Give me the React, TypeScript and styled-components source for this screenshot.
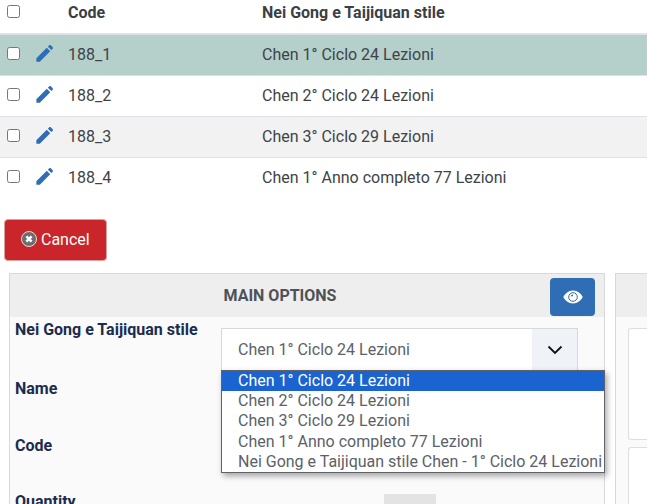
import React from 'react';
import styled, { createGlobalStyle } from 'styled-components';

const GlobalStyle = createGlobalStyle`
  html, body {
    margin: 0;
    padding: 0;
    height: 504px;
    overflow: hidden;
    background: #fff;
    font-family: Roboto, "Liberation Sans", sans-serif;
    font-size: 16px;
    color: #343a40;
  }
  * { box-sizing: border-box; }
`;

const rows = [
  { code: '188_1', name: 'Chen 1° Ciclo 24 Lezioni', tone: 'selected' },
  { code: '188_2', name: 'Chen 2° Ciclo 24 Lezioni', tone: 'plain' },
  { code: '188_3', name: 'Chen 3° Ciclo 29 Lezioni', tone: 'striped' },
  { code: '188_4', name: 'Chen 1° Anno completo 77 Lezioni', tone: 'plain' },
];

const options = [
  'Chen 1° Ciclo 24 Lezioni',
  'Chen 2° Ciclo 24 Lezioni',
  'Chen 3° Ciclo 29 Lezioni',
  'Chen 1° Anno completo 77 Lezioni',
  'Nei Gong e Taijiquan stile Chen - 1° Ciclo 24 Lezioni',
];

const PencilIcon = () => (
  <svg width="17" height="17" viewBox="0 0 24 24" fill="#2f6db5">
    <path d="M0.5 23.5 V18.6 L15.2 3.9 L20.1 8.8 L5.4 23.5 Z M16.8 2.3 L18.4 0.7 C19.2 -0.1 20.4 -0.1 21.2 0.7 L23.3 2.8 C24.1 3.6 24.1 4.8 23.3 5.6 L21.7 7.2 Z" />
  </svg>
);

const EyeIcon = () => (
  <svg width="20" height="14" viewBox="0 0 20 14">
    <path d="M10 0.5 C5.5 0.5 2 3.5 0.3 7 C2 10.5 5.5 13.5 10 13.5 C14.5 13.5 18 10.5 19.7 7 C18 3.5 14.5 0.5 10 0.5 Z" fill="#fff" />
    <circle cx="10" cy="7" r="4.3" fill="#fff" stroke="#2f6db5" strokeWidth="1" />
    <path d="M7.6 6.2 A2.6 2.6 0 0 1 10 4.4 L10 6.2 Z" fill="#2f6db5" />
  </svg>
);

const CancelIcon = () => (
  <svg width="16" height="16" viewBox="0 0 16 16">
    <circle cx="8" cy="8" r="7.5" fill="#6d6d6d" stroke="#e9dada" strokeWidth="1" />
    <path d="M5.4 5.4 L10.6 10.6 M10.6 5.4 L5.4 10.6" stroke="#fff" strokeWidth="2.6" />
  </svg>
);

const ChevronIcon = () => (
  <svg width="16" height="10" viewBox="0 0 16 10" fill="none">
    <path d="M1.5 1.5 L8 8 L14.5 1.5" stroke="#111" strokeWidth="1.8" />
  </svg>
);

export default function App() {
  return (
    <Page>
      <GlobalStyle />
      <TableGrid>
        <HeaderRow>
          <CheckCell><Check /></CheckCell>
          <span />
          <HeadText>Code</HeadText>
          <HeadText>Nei Gong e Taijiquan stile</HeadText>
        </HeaderRow>
        {rows.map((row) => (
          <BodyRow key={row.code} $tone={row.tone}>
            <CheckCell><Check /></CheckCell>
            <IconCell><PencilIcon /></IconCell>
            <span>{row.code}</span>
            <span>{row.name}</span>
          </BodyRow>
        ))}
      </TableGrid>

      <CancelButton>
        <CancelIcon />
        Cancel
      </CancelButton>

      <Columns>
        <Panel>
          <PanelHeader>
            <PanelTitle>MAIN OPTIONS</PanelTitle>
            <EyeButton><EyeIcon /></EyeButton>
          </PanelHeader>
          <Form>
            <FieldRow>
              <Label>Nei Gong e Taijiquan stile</Label>
              <SelectBox>
                <SelectValue>Chen 1° Ciclo 24 Lezioni</SelectValue>
                <SelectArrow><ChevronIcon /></SelectArrow>
              </SelectBox>
              <Dropdown>
                {options.map((option, i) => (
                  <Option key={option} $active={i === 0}>{option}</Option>
                ))}
              </Dropdown>
            </FieldRow>
            <NameLabel>Name</NameLabel>
            <CodeRow>
              <Label>Code</Label>
              <InputBox />
            </CodeRow>
            <QuantityRow>
              <Label>Quantity</Label>
              <Stepper />
            </QuantityRow>
          </Form>
        </Panel>
        <SidePanel>
          <SideHeader />
          <SideBody>
            <SideBox $height={112} />
            <SideBox $height={60} />
          </SideBody>
        </SidePanel>
      </Columns>
    </Page>
  );
}

const Page = styled.div`
  width: 647px;
  height: 504px;
  overflow: hidden;
`;

const TableGrid = styled.div`
  display: flex;
  flex-direction: column;
`;

const HeaderRow = styled.div`
  display: grid;
  grid-template-columns: 30px 38px 194px 1fr;
  align-items: center;
  height: 35px;
  padding-bottom: 9px;
  border-bottom: 2px solid #dee2e6;
`;

const HeadText = styled.span`
  font-weight: 700;
  font-size: 16px;
  color: #3a3f44;
`;

const BodyRow = styled.div<{ $tone: string }>`
  display: grid;
  grid-template-columns: 30px 38px 194px 1fr;
  align-items: center;
  height: 41px;
  padding-bottom: 2px;
  font-size: 16px;
  color: #3e4347;
  border-bottom: 1px solid #dee2e6;
  background: ${(p) =>
    p.$tone === 'selected' ? '#b5cfcb' : p.$tone === 'striped' ? '#f2f2f2' : '#fff'};

  &:last-child {
    border-bottom-color: transparent;
  }
`;

const CheckCell = styled.span`
  display: flex;
  padding-left: 7px;
  margin-top: -1px;
`;

const Check = styled.span`
  width: 13px;
  height: 13px;
  background: #fff;
  border: 1px solid #767676;
  border-radius: 2.5px;
`;

const IconCell = styled.span`
  display: flex;
  padding-left: 6px;
  margin-top: -2px;
`;

const CancelButton = styled.button`
  display: flex;
  align-items: center;
  gap: 4px;
  width: 103px;
  height: 42px;
  margin: 20px 0 12px 4px;
  padding: 0 0 2px 16px;
  background: #c9252a;
  border: 1px solid #d9a0a0;
  border-radius: 4px;
  color: #fff;
  font-family: inherit;
  font-size: 16px;
`;

const Columns = styled.div`
  display: grid;
  grid-template-columns: 596px 60px;
  gap: 10px;
  margin-left: 9px;
`;

const Panel = styled.section`
  position: relative;
  height: 260px;
  background: #fafafa;
  border: 1px solid #d8d8d8;
  border-bottom: none;
`;

const PanelHeader = styled.header`
  display: flex;
  align-items: center;
  justify-content: center;
  height: 43px;
  padding-right: 54px;
  background: #eeeeee;
  position: relative;
`;

const PanelTitle = styled.h3`
  margin: 0;
  font-size: 16px;
  font-weight: 700;
  color: #4d5257;
`;

const EyeButton = styled.button`
  position: absolute;
  right: 9px;
  top: 4px;
  width: 45px;
  height: 38px;
  display: flex;
  align-items: center;
  justify-content: center;
  padding: 0;
  background: #2f6db5;
  border: none;
  border-radius: 4px;
`;

const Form = styled.div`
  display: flex;
  flex-direction: column;
  padding-left: 5px;
`;

const FieldRow = styled.div`
  position: relative;
  display: grid;
  grid-template-columns: 206px 357px;
  height: 53px;
  padding-top: 3px;
`;

const Label = styled.label`
  font-size: 16px;
  font-weight: 700;
  color: #1b2c4f;
`;

const SelectBox = styled.div`
  display: flex;
  justify-content: space-between;
  height: 44px;
  margin-top: 8px;
  background: #fff;
  border: 1px solid #d8d8d8;
`;

const SelectValue = styled.span`
  padding: 11px 0 0 16px;
  font-size: 16px;
  color: #5c6167;
`;

const SelectArrow = styled.span`
  display: flex;
  align-items: center;
  justify-content: center;
  width: 45px;
  background: #eff3f8;
`;

const Dropdown = styled.ul`
  position: absolute;
  left: 206px;
  top: 53px;
  width: 384px;
  margin: 0;
  padding: 0;
  list-style: none;
  background: #fff;
  border: 1px solid #5f6368;
  box-shadow: 2px 3px 6px rgba(0, 0, 0, 0.35);
  z-index: 2;
`;

const Option = styled.li<{ $active: boolean }>`
  height: 20.2px;
  line-height: 20px;
  padding-left: 16px;
  font-size: 16px;
  white-space: nowrap;
  color: ${(p) => (p.$active ? '#fff' : '#5c6167')};
  background: ${(p) => (p.$active ? '#1a63d0' : 'transparent')};
`;

const NameLabel = styled(Label)`
  margin-top: 9px;
`;

const CodeRow = styled.div`
  display: grid;
  grid-template-columns: 206px 357px;
  margin-top: 38px;
`;

const InputBox = styled.div`
  height: 39px;
  margin-top: -20px;
  background: #fff;
  border: 1px solid #d8d8d8;
`;

const QuantityRow = styled.div`
  display: flex;
  margin-top: 37px;
`;

const Stepper = styled.div`
  width: 52px;
  height: 20px;
  margin: 2px 0 0 308px;
  background: #e3e3e3;
`;

const SidePanel = styled.section`
  height: 260px;
  background: #fafafa;
  border: 1px solid #d8d8d8;
  border-right: none;
  border-bottom: none;
`;

const SideHeader = styled.div`
  height: 43px;
  background: #eeeeee;
`;

const SideBody = styled.div`
  display: flex;
  flex-direction: column;
  gap: 7px;
  padding: 11px 0 0 12px;
`;

const SideBox = styled.div<{ $height: number }>`
  height: ${(p) => p.$height}px;
  background: #fff;
  border: 1px solid #dedede;
  border-right: none;
  border-radius: 3px 0 0 3px;
`;
